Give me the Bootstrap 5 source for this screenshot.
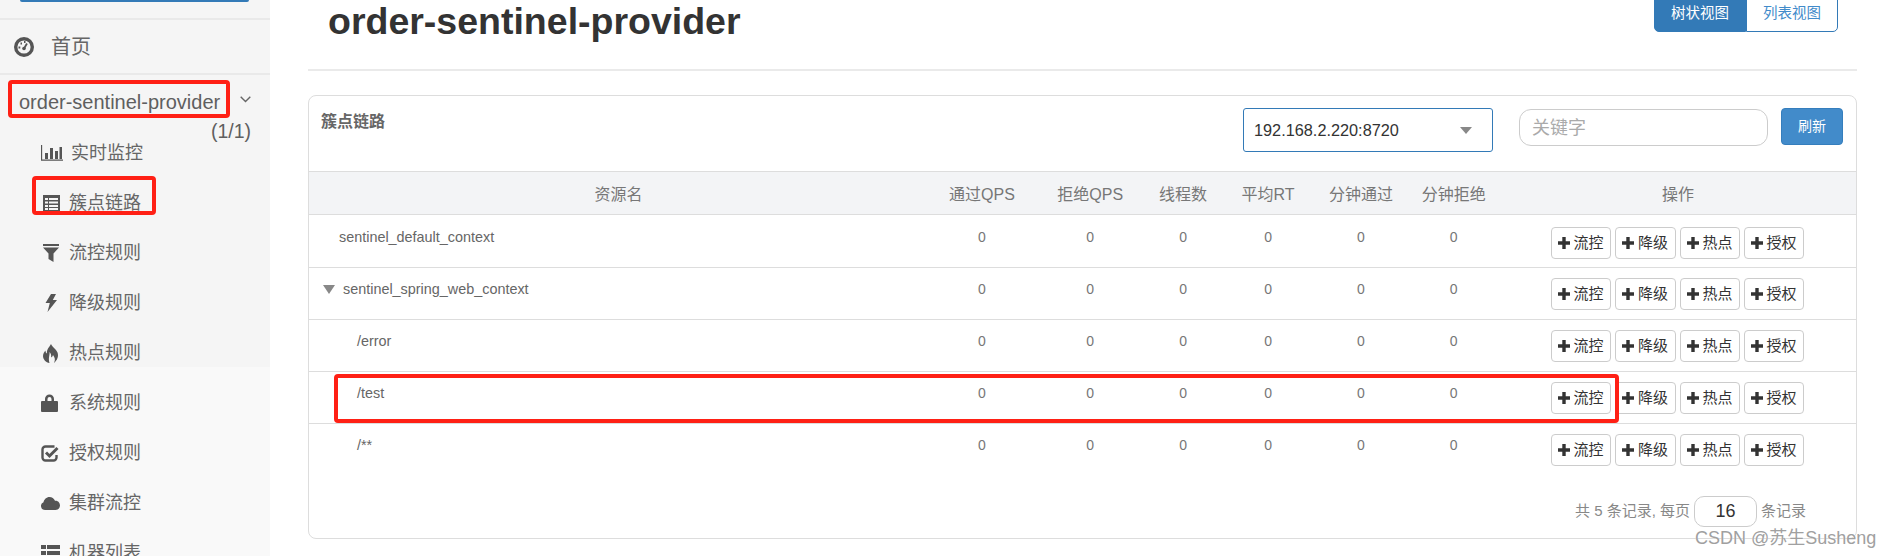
<!DOCTYPE html>
<html lang="zh">
<head>
<meta charset="utf-8">
<title>order-sentinel-provider</title>
<link href="https://cdn.jsdelivr.net/npm/bootstrap@5.3.0/dist/css/bootstrap.min.css" rel="stylesheet">
<style>
html,body{height:556px;overflow:hidden;background:#fff;}
body{font-family:"Liberation Sans","Noto Sans CJK SC",sans-serif;color:#666;font-size:14px;}
.shot{height:556px;width:1892px;overflow:hidden;}
.side{width:270px;flex:none;height:556px;background:linear-gradient(#f5f5f5 367px,#f9f9f9 367px);color:#666;overflow:hidden;}
.side-top{height:20px;border-bottom:2px solid #e9e9e9;position:relative;}
.side-top::before{content:"";position:absolute;left:20px;width:229px;top:0;height:2px;background:#337ab7;border-radius:0 0 3px 3px;}
.side-home{height:55px;border-bottom:2px solid #e9e9e9;padding-left:14px;padding-top:1px;font-size:20px;gap:17px;}
.side-app{height:53px;padding-left:19px;font-size:20px;color:#5f5f5f;}
.side-chev{left:240px;top:21px;}
.side-count{right:19px;top:44px;font-size:19.5px;line-height:24px;}
.side-item{height:50px;padding-left:41px;font-size:18px;}
.side-ico{width:28px;flex:none;}
.side-ico.first{width:30px;}
.main-area{flex:1;min-width:0;padding-right:35px;padding-left:58px;}
.page-head{height:71px;margin-left:-20px;padding-left:20px;border-bottom:2px solid #eaeaea;}
.page-title{font-size:37.5px;font-weight:700;color:#333;line-height:42px;margin:0;}
.view-group{margin-top:-4px;margin-right:19px;height:36px;}
.view-btn{width:92px;font-size:14.5px;border:1px solid #337ab7;background:#fff;color:#428bca;border-radius:0 0 5px 0;padding:6px 0 0;line-height:20px;text-align:center;}
.view-btn.on{background:#337ab7;color:#fff;border-radius:0 0 0 5px;width:92px;}
.panel-box{margin-top:24px;height:444px;border:1px solid #ddd;border-radius:8px;overflow:hidden;margin-left:-20px;}
.panel-top{height:75px;padding:12px 13px 0 12px;}
.panel-name{font-size:16px;font-weight:700;color:#666;line-height:26px;margin-right:auto;padding-top:1px;}
.ip-select{width:250px;height:44px;border:1px solid #337ab7;border-radius:3px;color:#333;font-size:16.3px;padding:0 20px 0 10px;}
.ip-caret{border-left:6px solid transparent;border-right:6px solid transparent;border-top:7px solid #888;}
.kw-input.form-control{width:249px;height:37px;margin-left:26px;margin-top:1px;border:1px solid #ccc;border-radius:12px;font-size:18px;padding:1px 12px 0;box-shadow:none;}
.kw-input::placeholder{color:#aaa;}
.go-btn.btn{width:62px;height:37px;margin-left:13px;background:#428bca;border:1px solid #357ebd;color:#fff;font-size:14px;padding:0;border-radius:4px;}
.res-table.table{table-layout:fixed;margin:0;width:100%;--bs-table-bg:transparent;color:#777;}
.res-table th{background:#f3f4f6;font-weight:400;font-size:16px;color:#777;text-align:center;height:43px;padding:3px 0 0;vertical-align:middle;border-top:1px solid #ddd;border-bottom:1px solid #ddd;}
.res-table td{height:52px;padding:11px 0 0;text-align:center;vertical-align:top;font-size:14px;line-height:20px;border-bottom:1px solid #ddd;color:#777;}
.res-table tr.first-row td{height:53px;padding-top:12px;}
.res-table tr.last-row td{border-bottom:0;}
.res-table td.res-name{text-align:left;color:#666;font-size:14.4px;}
.res-table td.ops{padding:10px 2px 0 0;}
.l1{padding-left:30px!important;}
.l2{padding-left:48px!important;}
.tri{border-left:6px solid transparent;border-right:6px solid transparent;border-top:9px solid #888;margin:6px 8px 0 14px;display:inline-block;}
.op-btn.btn{width:60px;height:32px;background:#fff;border:1px solid #ccc;border-radius:4px;color:#333;font-size:15px;padding:0;gap:4px;line-height:20px;}
.op-btn.wide{width:61px;}
.pager{padding-right:50px;margin-top:20px;height:32px;font-size:15px;color:#888;}
.pager-input.form-control{width:63px;height:31px;margin:0 4px;border:1px solid #ccc;border-radius:10px;font-size:18px;text-align:center;color:#333;padding:0;box-shadow:none;}
.red-box{position:absolute;border:4px solid #ff2015;border-radius:4px;pointer-events:none;}
.rb-app{left:8px;top:80px;width:222px;height:38px;}
.rb-node{left:32px;top:176px;width:124px;height:39px;}
.rb-row{left:334px;top:374px;width:1285px;height:49px;}
.mark-csdn{position:absolute;left:1695px;top:526px;font-size:18px;line-height:24px;color:#a0a0a0;text-shadow:0 0 1px #fff;}
</style>
</head>
<body>
<div class="shot d-flex position-relative">
  <aside class="side">
    <div class="side-top"></div>
    <div class="side-home d-flex align-items-center">
      <svg width="20" height="20" viewBox="0 0 20 20"><circle cx="10" cy="10" r="8.300" fill="none" stroke="#555" stroke-width="3.400"/><circle cx="10" cy="11.500" r="1.800" fill="#555"/><path d="M10 11.500l3-5" stroke="#555" stroke-width="1.800"/><path d="M4.500 10.500h1.800M6.500 6.500h1.500M10 5h1.500" stroke="#555" stroke-width="1.800"/></svg>
      <span>首页</span>
    </div>
    <div class="side-app d-flex align-items-center position-relative">
      <span>order-sentinel-provider</span>
      <svg class="position-absolute side-chev" width="11" height="7" viewBox="0 0 11 7"><path d="M.7.7l4.8 4.8L10.300.7" fill="none" stroke="#666" stroke-width="1.400"/></svg>
      <span class="position-absolute side-count">(1/1)</span>
    </div>
    <div class="side-item d-flex align-items-center">
      <span class="side-ico first"><svg class="d-block" width="22" height="16" viewBox="0 0 22 16"><path d="M.5 0v15.200H22" fill="none" stroke="#555" stroke-width="1.300"/><path d="M4 8h3v6H4zM9 3h3v11H9zM14 6h3v8h-3zM18.500 2h2.500v12h-2.500z" fill="#555"/></svg></span><span>实时监控</span>
    </div>
    <div class="side-item d-flex align-items-center">
      <span class="side-ico"><svg class="d-block ico-list" width="19" height="17" viewBox="0 0 19 17"><path fill="#555" d="M2 0h17v17H2z"/><path fill="#f5f5f5" d="M4 3h3v2H4zM8 3h9v2H8zM4 6.500h3v2H4zM8 6.500h9v2H8zM4 10h3v2H4zM8 10h9v2H8zM4 13h3v2H4zM8 13h9v2H8z"/></svg></span><span>簇点链路</span>
    </div>
    <div class="side-item d-flex align-items-center">
      <span class="side-ico"><svg class="d-block" width="18" height="18" viewBox="0 0 18 18"><path fill="#555" d="M2 0h16v2H2zM2 3.500h16l-5.500 6v8.500l-5-3V9.500z"/></svg></span><span>流控规则</span>
    </div>
    <div class="side-item d-flex align-items-center">
      <span class="side-ico"><svg class="d-block" width="16" height="18" viewBox="0 0 16 18"><path fill="#555" d="M10 0h5l-3.200 6H16L6.500 18l2.300-9H4.500z"/></svg></span><span>降级规则</span>
    </div>
    <div class="side-item d-flex align-items-center">
      <span class="side-ico"><svg class="d-block" width="18" height="19" viewBox="0 0 18 19"><path fill="#555" d="M10 0c1 3 5 5 6.500 8.500 1.500 4-.5 8-3.500 10.500 1.500-3 1-5.500-1-8-.5 1.500-1 2-2 2.500.5-2 0-4-1.500-5.500C9 11 7 14 8.500 19 5 18.500 2 15.500 2 12c0-2.500 1.500-4.500 2.500-5.500C4.500 8 5 9 6 9.500 5.500 5.500 8 3.500 10 0z"/></svg></span><span>热点规则</span>
    </div>
    <div class="side-item d-flex align-items-center">
      <span class="side-ico"><svg class="d-block" width="17" height="18" viewBox="0 0 17 18"><path fill="#555" d="M4 7V5a4.500 4.500 0 0 1 9 0v2h3a1 1 0 0 1 1 1v9a1 1 0 0 1-1 1H1a1 1 0 0 1-1-1V8a1 1 0 0 1 1-1zm2.500 0h4V5a2 2 0 0 0-4 0z"/></svg></span><span>系统规则</span>
    </div>
    <div class="side-item d-flex align-items-center">
      <span class="side-ico"><svg class="d-block" width="18" height="17" viewBox="0 0 18 17"><path fill="none" stroke="#555" stroke-width="2.400" d="M15.500 10v2.500a3 3 0 0 1-3 3h-8a3 3 0 0 1-3-3v-8a3 3 0 0 1 3-3h9"/><path fill="none" stroke="#555" stroke-width="3" d="M5 7.500l3.500 3.500L16.500 3"/></svg></span><span>授权规则</span>
    </div>
    <div class="side-item d-flex align-items-center">
      <span class="side-ico"><svg class="d-block" width="19" height="13" viewBox="0 0 19 13"><path fill="#555" d="M4 13a4 4 0 0 1-1.500-7.700C3 2.500 5.500 0 8.500 0c2.500 0 4.500 1.500 5.500 3.700 3-.4 5 2 5 4.800 0 2.500-2 4.500-4.500 4.500z"/></svg></span><span>集群流控</span>
    </div>
    <div class="side-item d-flex align-items-center">
      <span class="side-ico"><svg class="d-block" width="19" height="17" viewBox="0 0 19 17"><path fill="#555" d="M0 0h5v4H0zM6 0h13v4H6zM0 6h5v4H0zM6 6h13v4H6zM0 12h5v4H0zM6 12h13v4H6z"/></svg></span><span>机器列表</span>
    </div>
  </aside>
  <main class="main-area">
    <div class="page-head d-flex justify-content-between align-items-start">
      <h1 class="page-title">order-sentinel-provider</h1>
      <div class="btn-group view-group" role="group">
        <div class="view-btn on">树状视图</div>
        <div class="view-btn">列表视图</div>
      </div>
    </div>
    <section class="panel-box">
      <div class="panel-top d-flex align-items-start">
        <div class="panel-name">簇点链路</div>
        <div class="ip-select d-flex align-items-center justify-content-between">
          <span>192.168.2.220:8720</span><span class="ip-caret"></span>
        </div>
        <input class="form-control kw-input" placeholder="关键字">
        <button class="btn go-btn">刷新</button>
      </div>
      <table class="table res-table">
        <colgroup><col style="width:40%"><col style="width:7%"><col style="width:7%"><col style="width:5%"><col style="width:6%"><col style="width:6%"><col style="width:6%"><col style="width:23%"></colgroup>
        <thead><tr><th>资源名</th><th>通过QPS</th><th>拒绝QPS</th><th>线程数</th><th>平均RT</th><th>分钟通过</th><th>分钟拒绝</th><th>操作</th></tr></thead>
        <tbody id="rows"></tbody>
      </table>
      <div class="pager d-flex justify-content-end align-items-center">
        <span>共 5 条记录, 每页</span>
        <input class="form-control pager-input" value="16">
        <span>条记录</span>
      </div>
    </section>
  </main>
  <div class="red-box rb-app"></div>
  <div class="red-box rb-node"></div>
  <div class="red-box rb-row"></div>
  <div class="mark-csdn">CSDN @苏生Susheng</div>
</div>
<script>
const plus='<svg width="12" height="12" viewBox="0 0 12 12"><path fill="#333" d="M4.300 0h3.400v4.300H12v3.400H7.700V12H4.300V7.700H0V4.300h4.300z"/></svg>';
const data=[
 ['sentinel_default_context','l1','first-row',false],
 ['sentinel_spring_web_context','','',true],
 ['/error','l2','',false],
 ['/test','l2','',false],
 ['/**','l2','last-row',false]
];
const ops=['流控','降级','热点','授权'];
document.getElementById('rows').innerHTML=data.map(([n,c,r,t])=>{
  const btns=ops.map((o,i)=>'<button class="btn op-btn d-flex align-items-center justify-content-center'+(i==1?' wide':'')+'">'+plus+'<span>'+o+'</span></button>').join('');
  return '<tr class="'+r+'"><td class="res-name '+c+'">'+(t?'<span class="tri"></span>':'')+n+'</td>'+
   '<td>0</td><td>0</td><td>0</td><td>0</td><td>0</td><td>0</td>'+
   '<td class="ops"><div class="d-flex justify-content-center gap-1">'+btns+'</div></td></tr>';
}).join('');
</script>
</body>
</html>
